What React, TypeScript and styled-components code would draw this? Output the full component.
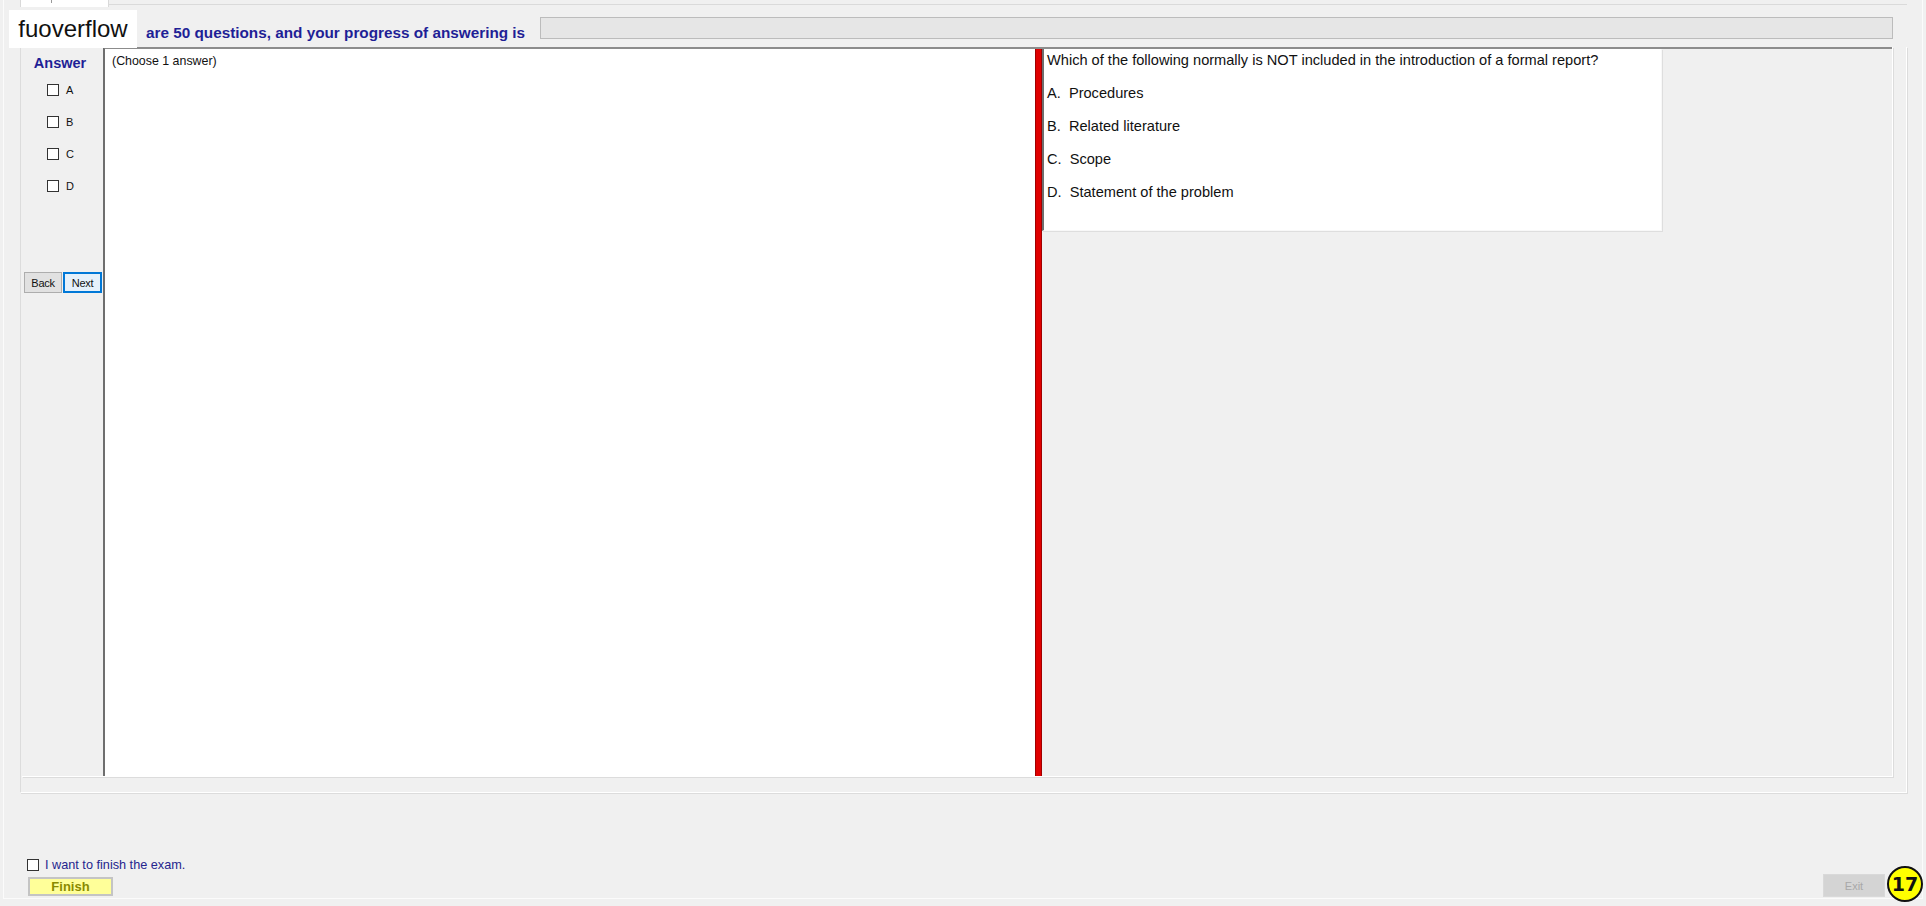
import React from "react";
import styled, { createGlobalStyle } from "styled-components";

const GlobalStyle = createGlobalStyle`
  html, body {
    margin: 0;
    padding: 0;
    background: #f0f0f0;
    font-family: "Liberation Sans", Arial, sans-serif;
  }
`;

const Screen = styled.div`
  position: relative;
  width: 1926px;
  height: 906px;
  overflow: hidden;
  background: #f0f0f0;
`;

const Frame = styled.div`
  margin: 0 3px;
  height: 898px;
  border-left: 1px solid #fbfbfb;
  border-right: 1px solid #fbfbfb;
  border-bottom: 1px solid #fbfbfb;
  display: flex;
  flex-direction: column;
`;

const TabStrip = styled.div`
  display: flex;
  align-items: flex-start;
  height: 7px;
  padding-left: 16px;
  padding-right: 15px;
`;

const Tab = styled.div`
  position: relative;
  width: 87px;
  height: 7px;
  background: #ffffff;
  border-left: 1px solid #d9d9d9;
  border-right: 1px solid #d9d9d9;
  &::after {
    content: "";
    position: absolute;
    left: 30px;
    top: 0;
    width: 1px;
    height: 3px;
    background: #9a9a9a;
  }
`;

const TabRule = styled.div`
  flex: 1;
  margin-top: 4px;
  border-top: 1px solid #dadada;
`;

const Header = styled.div`
  display: flex;
  align-items: flex-start;
  height: 40px;
  padding-left: 142px;
  padding-right: 29px;
`;

const Headline = styled.div`
  width: 394px;
  margin-top: 17px;
  font-size: 15.3px;
  line-height: 18px;
  font-weight: bold;
  color: #1f1f96;
  white-space: nowrap;
`;

const ProgressBar = styled.div`
  flex: 1;
  height: 20px;
  margin-top: 10px;
  background: #e6e6e6;
  border: 1px solid #bcbcbc;
`;

const Watermark = styled.div`
  position: absolute;
  left: 9px;
  top: 10px;
  width: 128px;
  height: 38px;
  background: #ffffff;
  color: #111111;
  font-size: 24px;
  line-height: 38px;
  text-align: center;
`;

const GroupBox = styled.div`
  box-sizing: border-box;
  margin: 0 15px 0 16px;
  height: 746px;
  display: flex;
  padding: 0 13px 15px 1px;
  border-left: 1px solid #dcdcdc;
  border-right: 1px solid #ffffff;
  border-bottom: 1px solid #ffffff;
  box-shadow: 1px 1px 0 #dcdcdc;
`;

const Workspace = styled.div`
  flex: 1;
  display: flex;
  border-right: 1px solid #ffffff;
  border-bottom: 1px solid #ffffff;
  box-shadow: 1px 1px 0 #dcdcdc;
`;

const AnswerColumn = styled.div`
  width: 81px;
  display: flex;
  flex-direction: column;
  padding-top: 8px;
`;

const AnswerTitle = styled.div`
  text-align: center;
  font-size: 14.5px;
  line-height: 16px;
  font-weight: bold;
  color: #1f1f96;
  padding-right: 5px;
`;

const OptionList = styled.div`
  display: flex;
  flex-direction: column;
  margin-top: 3px;
`;

const OptionRow = styled.label`
  display: flex;
  align-items: center;
  gap: 7px;
  height: 32px;
  padding-left: 25px;
  font-size: 11px;
  color: #111111;
`;

const Box = styled.span<{ $size?: number }>`
  display: inline-block;
  width: ${(p) => p.$size ?? 12}px;
  height: ${(p) => p.$size ?? 12}px;
  box-sizing: border-box;
  background: #ffffff;
  border: 1px solid #333333;
`;

const NavRow = styled.div`
  display: flex;
  gap: 1px;
  margin-top: 70px;
  padding-left: 2px;
`;

const NavButton = styled.button<{ $focused?: boolean }>`
  box-sizing: border-box;
  height: 21px;
  width: ${(p) => (p.$focused ? 39 : 38)}px;
  padding: 0;
  font-family: "Liberation Sans", Arial, sans-serif;
  font-size: 11px;
  letter-spacing: -0.3px;
  color: #111111;
  background: ${(p) => (p.$focused ? "#e5f1fb" : "#e1e1e1")};
  border: ${(p) => (p.$focused ? "2px solid #0078d7" : "1px solid #adadad")};
`;

const AnswerSheet = styled.div`
  width: 932px;
  box-sizing: border-box;
  background: #ffffff;
  border-top: 2px solid #8c8c8c;
  border-left: 2px solid #6e6e6e;
  padding: 4px 0 0 7px;
  font-size: 12.4px;
  line-height: 16px;
  color: #111111;
`;

const Splitter = styled.div`
  width: 7px;
  background: #e00000;
  border-top: 2px solid #8c8c8c;
  box-shadow: inset 1px 0 0 #a00000, inset -1px 0 0 #a00000;
`;

const QuestionPane = styled.div`
  flex: 1;
  border-top: 2px solid #8c8c8c;
`;

const QuestionCard = styled.div`
  width: 620px;
  height: 182px;
  box-sizing: border-box;
  background: #ffffff;
  border-left: 2px solid #6e6e6e;
  border-right: 1px solid #f8f8f8;
  border-bottom: 1px solid #f8f8f8;
  box-shadow: 1px 1px 0 #dedede;
  padding: 3px 0 0 3px;
  font-size: 14.6px;
  line-height: 16px;
  color: #111111;
`;

const Paragraph = styled.p`
  margin: 0 0 17px;
  white-space: pre;
`;

const Footer = styled.div`
  flex: 1;
  display: flex;
  justify-content: space-between;
  align-items: flex-end;
  padding: 0 37px 2px 23px;
`;

const FinishStack = styled.div`
  display: flex;
  flex-direction: column;
  gap: 6px;
`;

const ConfirmRow = styled.label`
  display: flex;
  align-items: center;
  gap: 6px;
  font-size: 12.7px;
  line-height: 12px;
  color: #25258e;
`;

const FinishButton = styled.button`
  box-sizing: border-box;
  margin-left: 1px;
  width: 85px;
  height: 19px;
  padding: 0;
  font-family: "Liberation Sans", Arial, sans-serif;
  font-size: 13px;
  font-weight: bold;
  color: #8a8a00;
  background: #ffff99;
  border: 2px solid #c4c4c4;
`;

const ExitButton = styled.button`
  box-sizing: border-box;
  width: 62px;
  height: 23px;
  margin-bottom: -1px;
  padding: 0;
  font-family: "Liberation Sans", Arial, sans-serif;
  font-size: 11px;
  color: #a8a8a8;
  background: #d4d4d4;
  border: 1px solid #d9d9d9;
`;

const StepBadge = styled.div`
  position: absolute;
  left: 1887px;
  top: 866px;
  width: 36px;
  height: 36px;
  box-sizing: border-box;
  border-radius: 50%;
  background: #ffff00;
  border: 2px solid #111111;
  display: flex;
  align-items: center;
  justify-content: center;
  font-family: "DejaVu Sans", "Liberation Sans", sans-serif;
  font-size: 19px;
  font-weight: bold;
  color: #111111;
`;

const options = ["A", "B", "C", "D"];
const answers = ["Procedures", "Related literature", "Scope", "Statement of the problem"];

const App: React.FunctionComponent = () => {
  return (
    <Screen>
      <GlobalStyle />
      <Frame>
        <TabStrip>
          <Tab />
          <TabRule />
        </TabStrip>
        <Header>
          <Headline>are 50 questions, and your progress of answering is</Headline>
          <ProgressBar />
        </Header>
        <GroupBox>
          <Workspace>
            <AnswerColumn>
              <AnswerTitle>Answer</AnswerTitle>
              <OptionList>
                {options.map((o) => (
                  <OptionRow key={o}>
                    <Box />
                    {o}
                  </OptionRow>
                ))}
              </OptionList>
              <NavRow>
                <NavButton>Back</NavButton>
                <NavButton $focused>Next</NavButton>
              </NavRow>
            </AnswerColumn>
            <AnswerSheet>(Choose 1 answer)</AnswerSheet>
            <Splitter />
            <QuestionPane>
              <QuestionCard>
                <Paragraph>
                  Which of the following normally is NOT included in the introduction of a formal report?
                </Paragraph>
                {answers.map((a, i) => (
                  <Paragraph key={a}>{`${options[i]}.  ${a}`}</Paragraph>
                ))}
              </QuestionCard>
            </QuestionPane>
          </Workspace>
        </GroupBox>
        <Footer>
          <FinishStack>
            <ConfirmRow>
              <Box />
              I want to finish the exam.
            </ConfirmRow>
            <FinishButton>Finish</FinishButton>
          </FinishStack>
          <ExitButton disabled>Exit</ExitButton>
        </Footer>
      </Frame>
      <Watermark>fuoverflow</Watermark>
      <StepBadge>17</StepBadge>
    </Screen>
  );
};

export default App;
